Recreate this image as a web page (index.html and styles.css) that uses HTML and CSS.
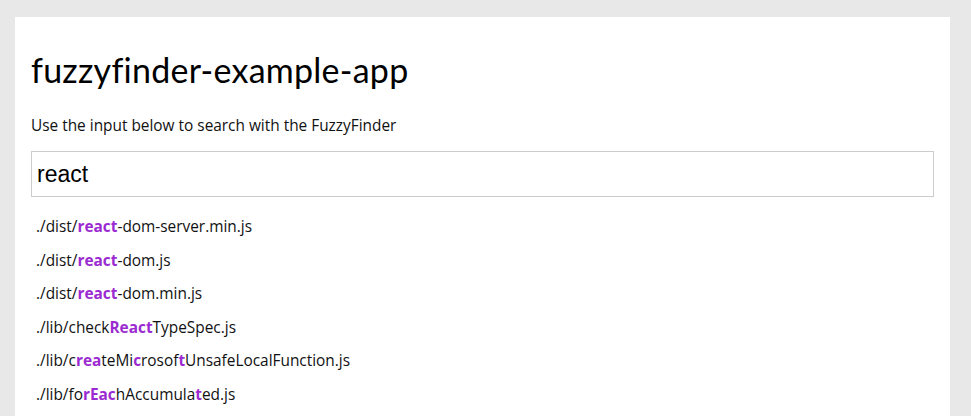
FILE: index.html
```html
<!DOCTYPE html>
<html>
<head>
<meta charset="utf-8">
<link rel="stylesheet" href="styles.css">
</head>
<body>
<div class="card">
  <h1 class="title">fuzzyfinder-example-app</h1>
  <p class="intro">Use the input below to search with the FuzzyFinder</p>
  <input class="search" type="text" value="react">
  <ul class="results">
    <li>./dist/<b>react</b>-dom-server.min.js</li>
    <li>./dist/<b>react</b>-dom.js</li>
    <li>./dist/<b>react</b>-dom.min.js</li>
    <li>./lib/check<b>React</b>TypeSpec.js</li>
    <li>./lib/c<b>rea</b>teMi<b>c</b>rosof<b>t</b>UnsafeLocalFunction.js</li>
    <li>./lib/fo<b>rEac</b>hAccumula<b>t</b>ed.js</li>
  </ul>
</div>
</body>
</html>
```
FILE: styles.css
```css
html, body {
  margin: 0;
  padding: 0;
  background: #e8e8e8;
  height: 100%;
  overflow: hidden;
}
.card {
  background: #fff;
  margin: 17px 21px 0 15px;
  padding: 33px 16px 40px;
  min-height: 500px;
  font-family: "Open Sans", sans-serif;
  color: #111;
}
.title {
  font-family: "Lato", sans-serif;
  font-weight: 400;
  font-size: 34px;
  letter-spacing: 0.25px;
  line-height: 40px;
  margin: 0 0 26px;
  color: #000;
}
.intro {
  font-size: 15.4px;
  line-height: 20px;
  margin: 0 0 15px;
}
.search {
  display: block;
  box-sizing: border-box;
  width: 100%;
  height: 46px;
  border: 1px solid #cccccc;
  padding: 0 5px;
  font-family: "Liberation Sans", Arial, sans-serif;
  font-size: 23px;
  color: #000;
  outline: none;
  margin: 0;
}
.results {
  list-style: none;
  margin: 13px 0 0;
  padding: 0 0 0 5px;
}
.results li {
  font-size: 15.4px;
  line-height: 20px;
  padding: 7px 0 6.5px;
}
.results b {
  color: #9b2bd0;
  font-weight: 700;
}
```
